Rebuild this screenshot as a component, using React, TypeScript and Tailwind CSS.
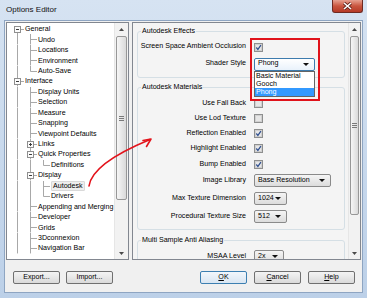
import React from "react";

type TreeRow = {
  label: string;
  level: number;
  conn: "first" | "mid" | "last";
  exp?: "minus" | "plus";
  selected?: boolean;
};

const tree: TreeRow[] = [
  { label: "General", level: 0, conn: "first", exp: "minus" },
  { label: "Undo", level: 1, conn: "mid" },
  { label: "Locations", level: 1, conn: "mid" },
  { label: "Environment", level: 1, conn: "mid" },
  { label: "Auto-Save", level: 1, conn: "last" },
  { label: "Interface", level: 0, conn: "mid", exp: "minus" },
  { label: "Display Units", level: 1, conn: "mid" },
  { label: "Selection", level: 1, conn: "mid" },
  { label: "Measure", level: 1, conn: "mid" },
  { label: "Snapping", level: 1, conn: "mid" },
  { label: "Viewpoint Defaults", level: 1, conn: "mid" },
  { label: "Links", level: 1, conn: "mid", exp: "plus" },
  { label: "Quick Properties", level: 1, conn: "mid", exp: "minus" },
  { label: "Definitions", level: 2, conn: "last" },
  { label: "Display", level: 1, conn: "mid", exp: "minus" },
  { label: "Autodesk", level: 2, conn: "mid", selected: true },
  { label: "Drivers", level: 2, conn: "last" },
  { label: "Appending and Merging", level: 1, conn: "mid" },
  { label: "Developer", level: 1, conn: "mid" },
  { label: "Grids", level: 1, conn: "mid" },
  { label: "3Dconnexion", level: 1, conn: "mid" },
  { label: "Navigation Bar", level: 1, conn: "mid" },
];

const ROW_H = 10.45;
const MID = 5.5;
const LINE = "#a8a8a8";

function Guide() {
  return (
    <svg width="13" height={ROW_H} viewBox={`0 0 13 ${ROW_H}`} className="block shrink-0">
      <line x1="6.5" y1="0" x2="6.5" y2={ROW_H} stroke={LINE} />
    </svg>
  );
}

function Connector({ conn, exp }: { conn: TreeRow["conn"]; exp?: TreeRow["exp"] }) {
  return (
    <svg width="13" height={ROW_H} viewBox={`0 0 13 ${ROW_H}`} className="block shrink-0">
      <line
        x1="6.5"
        y1={conn === "first" ? MID : 0}
        x2="6.5"
        y2={conn === "last" ? MID : ROW_H}
        stroke={LINE}
      />
      <line x1="6.5" y1={MID} x2="13" y2={MID} stroke={LINE} />
      {exp && (
        <>
          <rect x="3.5" y={MID - 3} width="6" height="6" fill="#fdfdfd" stroke="#8f8f8f" />
          <line x1="5" y1={MID} x2="8" y2={MID} stroke="#3a3a3a" />
          {exp === "plus" && <line x1="6.5" y1={MID - 1.5} x2="6.5" y2={MID + 1.5} stroke="#3a3a3a" />}
        </>
      )}
    </svg>
  );
}

function Arrow({ up }: { up?: boolean }) {
  return (
    <svg width="5" height="3" viewBox="0 0 5 3" className="block">
      <path d={up ? "M0 3 L2.5 0 L5 3 Z" : "M0 0 L5 0 L2.5 3 Z"} fill="#4a4a4a" />
    </svg>
  );
}

function ScrollBar({ width, thumbH }: { width: string; thumbH: string }) {
  return (
    <div className={`${width} flex h-full shrink-0 flex-col bg-[#f2f2f2] border-l border-[#e6e6e6]`}>
      <div className="flex h-[12px] items-center justify-center">
        <Arrow up />
      </div>
      <div
        className={`${thumbH} mx-[1px] mt-[1px] flex flex-col items-center justify-center gap-[1px] rounded-[2px] border border-[#979797] bg-gradient-to-r from-[#f6f6f6] to-[#dadada]`}
      >
        <div className="h-px w-[5px] bg-[#7a7a7a]" />
        <div className="h-px w-[5px] bg-[#7a7a7a]" />
        <div className="h-px w-[5px] bg-[#7a7a7a]" />
      </div>
      <div className="flex-1" />
      <div className="flex h-[12px] items-center justify-center">
        <Arrow />
      </div>
    </div>
  );
}

function Check({ checked }: { checked?: boolean }) {
  return (
    <svg width="9" height="9" viewBox="0 0 9 9" className="block">
      <rect x="0.5" y="0.5" width="8" height="8" fill="#f5f5f5" stroke="#8e8f8f" />
      <rect x="1.5" y="1.5" width="6" height="6" fill="#e6e6e6" stroke="#d0d0d0" />
      {checked && (
        <path d="M2.3 4.5 L3.9 6.4 L6.9 2.1" fill="none" stroke="#2f4f8f" strokeWidth="1.2" />
      )}
    </svg>
  );
}

function Combo({
  value,
  width,
  focused,
  children,
}: {
  value: string;
  width: string;
  focused?: boolean;
  children?: React.ReactNode;
}) {
  return (
    <div className={`relative ${width}`}>
      <div
        className={
          focused
            ? "flex h-[13px] items-center justify-between rounded-[2px] border border-[#3d7bad] bg-gradient-to-b from-[#ffffff] to-[#e9f2fb] pl-[3px] pr-[5px]"
            : "flex h-[13px] items-center justify-between rounded-[2px] border border-[#8a8a8a] bg-gradient-to-b from-[#f5f5f5] to-[#dcdcdc] pl-[3px] pr-[5px]"
        }
      >
        <span>{value}</span>
        <svg width="6" height="3" viewBox="0 0 6 3" className="block">
          <path d="M0 0 L6 0 L3 3 Z" fill="#111" />
        </svg>
      </div>
      {children}
    </div>
  );
}

function Row({ label, className, children }: { label: string; className: string; children: React.ReactNode }) {
  return (
    <div className={`flex items-center ${className}`}>
      <div className="w-[108px] shrink-0 text-right">{label}</div>
      <div className="ml-[8px]">{children}</div>
    </div>
  );
}

function Button({ label, under, primary }: { label: string; under?: string; primary?: boolean }) {
  const rest = under ? label.slice(under.length) : label;
  return (
    <button
      className={
        primary
          ? "flex h-[13px] w-[47px] items-center justify-center rounded-[2px] border border-[#3c7fb1] bg-gradient-to-b from-[#f2f7fc] to-[#d9e6f2]"
          : "flex h-[13px] w-[47px] items-center justify-center rounded-[2px] border border-[#707070] bg-gradient-to-b from-[#f4f4f4] to-[#dadada]"
      }
    >
      {under && <span className="underline">{under}</span>}
      {rest}
    </button>
  );
}

export default function App() {
  return (
    <div className="relative h-[298px] w-[367px] overflow-hidden bg-gradient-to-b from-[#d6e3f2] to-[#bcd0e8] font-['Liberation_Sans',Arial,sans-serif] text-[7.1px] leading-none text-black">
      {/* title bar */}
      <div className="flex h-[20px] items-start justify-between">
        <div className="pl-[6px] pt-[5px] text-[8px] leading-[9px] text-[#111]">Options Editor</div>
        <div className="mr-[4px] flex h-[13px] w-[31px] items-center justify-center rounded-b-[3px] border border-t-0 border-[#6e2a22] bg-gradient-to-b from-[#e6a090] via-[#c9553f] to-[#b53a27]">
          <svg width="9" height="8" viewBox="0 0 9 8">
            <path d="M1 1 L8 7 M8 1 L1 7" stroke="#5a1d16" strokeWidth="3" />
            <path d="M1 1 L8 7 M8 1 L1 7" stroke="#fff" strokeWidth="1.6" />
          </svg>
        </div>
      </div>

      {/* client */}
      <div className="mx-[4px] flex h-[273px] flex-col border border-[#8ea5c2] bg-[#f0f0f0]">
        <div className="flex gap-[3px] pl-[1px] pt-[1px]">
          {/* tree */}
          <div className="flex h-[238px] w-[123px] border border-[#828790] bg-white">
            <div className="flex-1 overflow-hidden whitespace-nowrap pl-[4px] pt-[1px]">
              {tree.map((r) => (
                <div key={r.label} className="flex h-[10.45px] items-center">
                  {Array.from({ length: r.level }).map((_, i) => (
                    <Guide key={i} />
                  ))}
                  <Connector conn={r.conn} exp={r.exp} />
                  <span
                    className={
                      r.selected
                        ? "ml-px rounded-[1px] border border-[#d9d9d9] bg-[#eeeeee] px-px leading-[8px]"
                        : "ml-[1px] leading-[8px]"
                    }
                  >
                    {r.label}
                  </span>
                </div>
              ))}
            </div>
            <ScrollBar width="w-[14px]" thumbH="h-[164px]" />
          </div>

          {/* settings panel */}
          <div className="flex h-[238px] w-[229px] border border-[#828790] bg-[#f4f4f4]">
            <div className="flex-1 overflow-hidden pl-[4px] pr-[3px] pt-[3.5px]">
              <fieldset className="rounded-[3px] border border-[#d5dfe5] pb-[5px]">
                <legend className="ml-[3px] px-[1px] leading-[9px]">Autodesk Effects</legend>
                <Row label="Screen Space Ambient Occlusion" className="mt-[4px] h-[15px]">
                  <Check checked />
                </Row>
                <Row label="Shader Style" className="mt-[2px] h-[15px]">
                  <Combo value="Phong" width="w-[61px]" focused>
                    <div className="absolute left-0 top-[13px] z-10 w-[61px] border border-[#646464] bg-white">
                      <div className="h-[8.3px] pl-[1px] leading-[8.3px]">Basic Material</div>
                      <div className="h-[8.3px] pl-[1px] leading-[8.3px]">Gooch</div>
                      <div className="h-[8.3px] bg-[#3399ff] pl-[1px] leading-[8.3px] text-white">Phong</div>
                    </div>
                  </Combo>
                </Row>
              </fieldset>

              <fieldset className="mt-[5px] rounded-[3px] border border-[#d5dfe5] pb-[4.5px]">
                <legend className="ml-[3px] px-[1px] leading-[9px]">Autodesk Materials</legend>
                <div className="pt-[4.3px]">
                  <Row label="Use Fall Back" className="h-[15.2px]">
                    <Check />
                  </Row>
                  <Row label="Use Lod Texture" className="h-[15.2px]">
                    <Check />
                  </Row>
                  <Row label="Reflection Enabled" className="h-[15.2px]">
                    <Check checked />
                  </Row>
                  <Row label="Highlight Enabled" className="h-[15.2px]">
                    <Check checked />
                  </Row>
                  <Row label="Bump Enabled" className="h-[15.2px]">
                    <Check checked />
                  </Row>
                  <Row label="Image Library" className="mt-[1.5px] h-[15px]">
                    <Combo value="Base Resolution" width="w-[77px]" />
                  </Row>
                  <Row label="Max Texture Dimension" className="mt-[3px] h-[15px]">
                    <Combo value="1024" width="w-[33px]" />
                  </Row>
                  <Row label="Procedural Texture Size" className="mt-[3px] h-[15px]">
                    <Combo value="512" width="w-[33px]" />
                  </Row>
                </div>
              </fieldset>

              <fieldset className="mt-[6px] rounded-[3px] border border-[#d5dfe5] pb-[5px]">
                <legend className="ml-[3px] px-[1px] leading-[9px]">Multi Sample Anti Aliasing</legend>
                <Row label="MSAA Level" className="mt-[4.5px] h-[15px]">
                  <Combo value="2x" width="w-[30px]" />
                </Row>
              </fieldset>
            </div>
            <ScrollBar width="w-[12px]" thumbH="h-[179px]" />
          </div>
        </div>

        {/* buttons */}
        <div className="mt-[11px] flex justify-between pl-[8px] pr-[7px]">
          <div className="flex gap-[6px]">
            <Button label="Export..." />
            <Button label="Import..." />
          </div>
          <div className="flex gap-[7px]">
            <Button label="OK" under="O" primary />
            <Button label="Cancel" under="C" />
            <Button label="Help" under="H" />
          </div>
        </div>
      </div>

      {/* annotation: red highlight box */}
      <div className="pointer-events-none absolute left-[250px] top-[38px] h-[63px] w-[70px] border-2 border-[#e0121a]" />

      {/* annotation: red arrow */}
      <svg className="pointer-events-none absolute left-0 top-0" width="367" height="298" viewBox="0 0 367 298">
        <path d="M89 186 C91 172 110 156 150 139.5" fill="none" stroke="#e3131b" strokeWidth="1.6" strokeLinecap="round" />
        <path d="M143 140.5 L151 139 L146.5 146.5" fill="none" stroke="#e3131b" strokeWidth="1.6" strokeLinecap="round" strokeLinejoin="round" />
      </svg>
    </div>
  );
}
